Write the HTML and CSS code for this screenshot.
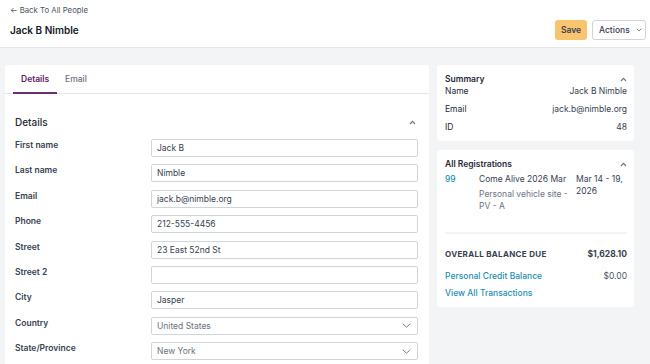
FILE: index.html
```html
<!DOCTYPE html>
<html>
<head>
  <title>Jack B Nimble</title>
  <link rel="stylesheet" href="styles.css">
</head>
<body>
  <div class="page-header">
    <div class="header-left">
      <a class="back-link" href="#">&larr; Back To All People</a>
      <h1>Jack B Nimble</h1>
    </div>
    <div class="header-actions">
      <button class="btn btn-save">Save</button>
      <button class="btn btn-actions">Actions
        <svg width="6" height="4" viewBox="0 0 6 4"><path d="M0.8 0.8 L3 3 L5.2 0.8" fill="none" stroke="#6b7280" stroke-width="0.9"/></svg>
      </button>
    </div>
  </div>

  <div class="main">
    <div class="card form-card">
      <div class="tabs">
        <div class="tab active">Details</div>
        <div class="tab">Email</div>
      </div>

      <div class="section">
        <div class="section-head">
          <h2>Details</h2>
          <svg class="chev" width="7" height="5" viewBox="0 0 7 5"><path d="M1 4 L3.5 1.4 L6 4" fill="none" stroke="#6b7280" stroke-width="1.1"/></svg>
        </div>

        <div class="form-row">
          <label>First name</label>
          <div class="field">Jack B</div>
        </div>
        <div class="form-row">
          <label>Last name</label>
          <div class="field">Nimble</div>
        </div>
        <div class="form-row">
          <label>Email</label>
          <div class="field">jack.b@nimble.org</div>
        </div>
        <div class="form-row">
          <label>Phone</label>
          <div class="field">212-555-4456</div>
        </div>
        <div class="form-row">
          <label>Street</label>
          <div class="field">23 East 52nd St</div>
        </div>
        <div class="form-row">
          <label>Street 2</label>
          <div class="field"></div>
        </div>
        <div class="form-row">
          <label>City</label>
          <div class="field">Jasper</div>
        </div>
        <div class="form-row">
          <label>Country</label>
          <div class="field select">United States
            <svg width="9" height="5" viewBox="0 0 9 5"><path d="M0.8 0.8 L4.5 4.2 L8.2 0.8" fill="none" stroke="#6b7280" stroke-width="0.9"/></svg>
          </div>
        </div>
        <div class="form-row">
          <label>State/Province</label>
          <div class="field select">New York
            <svg width="9" height="5" viewBox="0 0 9 5"><path d="M0.8 0.8 L4.5 4.2 L8.2 0.8" fill="none" stroke="#6b7280" stroke-width="0.9"/></svg>
          </div>
        </div>
      </div>
    </div>

    <div class="sidebar">
      <div class="card side-card">
        <div class="side-head">
          <h3>Summary</h3>
          <svg width="7" height="5" viewBox="0 0 7 5"><path d="M1 4 L3.5 1.4 L6 4" fill="none" stroke="#6b7280" stroke-width="1.1"/></svg>
        </div>
        <div class="kv"><span>Name</span><span class="val">Jack B Nimble</span></div>
        <div class="kv"><span>Email</span><span class="val">jack.b@nimble.org</span></div>
        <div class="kv"><span>ID</span><span class="val">48</span></div>
      </div>

      <div class="card side-card reg-card">
        <div class="side-head">
          <h3>All Registrations</h3>
          <svg width="7" height="5" viewBox="0 0 7 5"><path d="M1 4 L3.5 1.4 L6 4" fill="none" stroke="#6b7280" stroke-width="1.1"/></svg>
        </div>
        <div class="reg">
          <a class="reg-id" href="#">99</a>
          <div class="reg-info">
            <div class="reg-name">Come Alive 2026 Mar</div>
            <div class="reg-site">Personal vehicle site - PV - A</div>
          </div>
          <div class="reg-date">Mar 14 - 19, 2026</div>
        </div>
        <div class="divider"></div>
        <div class="balance">
          <span>OVERALL BALANCE DUE</span>
          <span>$1,628.10</span>
        </div>
        <div class="credit">
          <a href="#">Personal Credit Balance</a>
          <span>$0.00</span>
        </div>
        <a class="link" href="#">View All Transactions</a>
      </div>
    </div>
  </div>
</body>
</html>
```

FILE: styles.css
```css
html {
  overflow: hidden;
}

body {
  margin: 0;
  font-family: Inter, "Noto Sans", sans-serif;
  font-size: 8.5px;
  color: #1f2937;
  background-color: #f3f4f6;
  height: 364px;
  overflow: hidden;
}

a {
  text-decoration: none;
}

.page-header {
  display: flex;
  justify-content: space-between;
  height: 47px;
  padding: 0 4px 0 10px;
  background-color: #fff;
  border-bottom: 1px solid #e5e7eb;
}

.header-left {
  display: flex;
  flex-direction: column;
}

.back-link {
  margin-top: 4px;
  line-height: 12px;
  color: #4b5563;
  font-size: 7.8px;
}

h1 {
  margin: 6px 0 0;
  line-height: 16px;
  font-size: 10px;
  font-weight: 600;
  color: #111827;
}

.header-actions {
  display: flex;
  gap: 5px;
  margin-top: 20px;
}

.btn {
  height: 20px;
  border-radius: 3px;
  font-family: inherit;
  font-size: 8.5px;
  font-weight: 500;
  color: #374151;
  cursor: pointer;
}

.btn-save {
  width: 32px;
  padding: 0;
  font-weight: 600;
  background-color: #f9c46f;
  border: none;
}

.btn-actions {
  display: flex;
  align-items: center;
  gap: 6px;
  width: 54px;
  padding: 0 0 0 6px;
  background-color: #fff;
  border: 1px solid #d1d5db;
}

.main {
  display: grid;
  grid-template-columns: 424px 197px;
  gap: 8px;
  padding: 17px 16px 0 5px;
  align-items: start;
}

.card {
  background-color: #fff;
  border-radius: 3px;
}

.form-card {
  height: 320px;
}

.tabs {
  display: flex;
  height: 28px;
  padding-left: 8px;
  border-bottom: 1px solid #e5e7eb;
}

.tab {
  padding: 9px 8px 0;
  line-height: 10px;
  color: #6b7280;
  font-weight: 500;
}

.tab.active {
  width: 28px;
  color: #5b2163;
  font-weight: 600;
  border-bottom: 2px solid #6b2c73;
  margin-bottom: -1px;
}

.section {
  padding: 21px 11px 0 10px;
}

.section-head {
  display: flex;
  justify-content: space-between;
  align-items: center;
  height: 14px;
  margin-bottom: 10px;
}

h2 {
  margin: 0;
  font-size: 10px;
  font-weight: 500;
  color: #1f2937;
}

.chev {
  margin-right: 2px;
}

.form-row {
  display: grid;
  grid-template-columns: 136px 1fr;
  align-items: start;
  height: 25.4px;
}

.form-row label {
  line-height: 12px;
  font-weight: 600;
  color: #374151;
}

.field {
  display: flex;
  align-items: center;
  justify-content: space-between;
  height: 16px;
  padding: 0 6px 0 5px;
  border: 1px solid #d1d5db;
  border-radius: 2px;
  color: #374151;
}

.field.select {
  color: #6b7280;
}

.sidebar {
  display: flex;
  flex-direction: column;
  gap: 9px;
}

.side-card {
  padding: 8px 7px 8px 8px;
}

.side-head {
  display: flex;
  justify-content: space-between;
  align-items: center;
  height: 12px;
  line-height: 12px;
}

h3 {
  margin: 0;
  font-size: 8.5px;
  font-weight: 600;
  color: #1f2937;
}

.kv {
  display: flex;
  justify-content: space-between;
  line-height: 12px;
  margin-top: 6px;
}

.kv:nth-child(2) {
  margin-top: 0;
}

.val {
  color: #374151;
}

.reg {
  display: grid;
  grid-template-columns: 34px 97px 1fr;
  margin-top: 3px;
  line-height: 12px;
  height: 59px;
}

.reg-id {
  color: #1b8fb3;
  font-weight: 500;
}

.reg-name {
  color: #374151;
  margin-bottom: 3px;
}

.reg-site {
  color: #6b7280;
  width: 90px;
}

.reg-date {
  color: #374151;
}

.divider {
  height: 2px;
  background-color: #f3f4f6;
  margin-bottom: 14px;
}

.balance {
  display: flex;
  justify-content: space-between;
  line-height: 12px;
  font-weight: 700;
  color: #374151;
  font-size: 8px;
  margin-bottom: 10px;
}

.balance span:first-child {
  letter-spacing: 0.3px;
}

.balance span:last-child {
  font-size: 8.5px;
}

.credit {
  display: flex;
  justify-content: space-between;
  line-height: 12px;
  margin-bottom: 5px;
}

.credit a,
.link {
  color: #1b8fb3;
  font-weight: 500;
}

.link {
  display: block;
  line-height: 12px;
}

.credit span {
  color: #4b5563;
}
```
